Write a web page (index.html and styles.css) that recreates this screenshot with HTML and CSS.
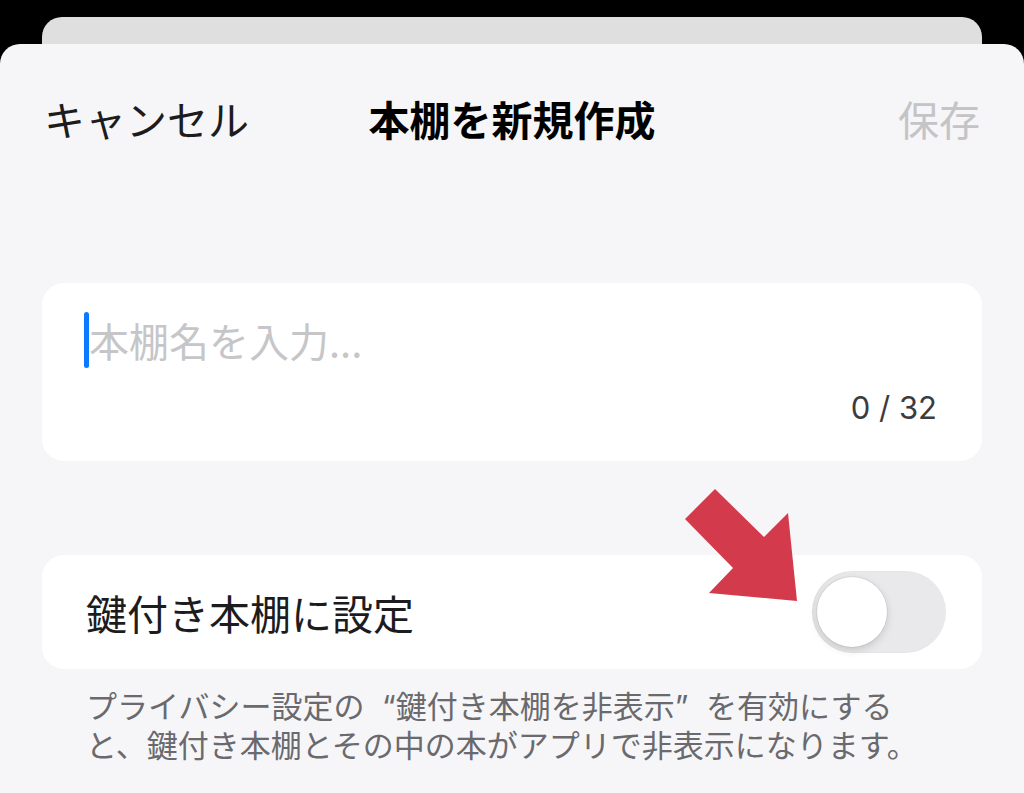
FILE: index.html
```html
<!DOCTYPE html>
<html lang="ja">
<head>
<meta charset="utf-8">
<title>本棚を新規作成</title>
<link rel="stylesheet" href="styles.css">
</head>
<body>
<div class="screen">
  <div class="back-card"></div>
  <div class="sheet">
    <header class="nav">
      <span class="nav-cancel">キャンセル</span>
      <span class="nav-title">本棚を新規作成</span>
      <span class="nav-save">保存</span>
    </header>

    <section class="input-card">
      <div class="input-row">
        <span class="caret"></span>
        <span class="placeholder">本棚名を入力...</span>
      </div>
      <div class="counter">0 / 32</div>
    </section>

    <section class="toggle-card">
      <span class="toggle-label">鍵付き本棚に設定</span>
      <span class="switch"><span class="knob"></span></span>
    </section>

    <p class="footnote">プライバシー設定の “鍵付き本棚を非表示” を有効にすると、鍵付き本棚とその中の本がアプリで非表示になります。</p>
  </div>

  <svg class="arrow" width="1024" height="793" viewBox="0 0 1024 793" aria-hidden="true">
    <polygon points="715,489 764,537 788,513 797,601 709,593 733,568 685,519" fill="#d33b4c"/>
  </svg>
</div>
</body>
</html>
```

FILE: styles.css
```css
* {
  box-sizing: border-box;
}

html, body {
  margin: 0;
  padding: 0;
  background: #000;
}

body {
  width: 1024px;
  height: 793px;
  overflow: hidden;
  font-family: "Inter", "Noto Sans CJK JP", sans-serif;
}

.screen {
  position: relative;
  width: 1024px;
  height: 793px;
  padding-top: 17px;
  display: flex;
  flex-direction: column;
}

.back-card {
  height: 27px;
  margin: 0 42px;
  background: #dfdfdf;
  border-radius: 20px 20px 0 0;
}

.sheet {
  flex: 1;
  background: #f6f6f8;
  border-radius: 20px 20px 0 0;
  display: flex;
  flex-direction: column;
}

.nav {
  height: 148px;
  padding: 0 44px;
  display: grid;
  grid-template-columns: 1fr auto 1fr;
  align-items: center;
  font-family: "Noto Sans CJK JP", sans-serif;
  font-size: 41px;
  line-height: 1;
}

.nav-cancel {
  color: #1c1c1e;
  justify-self: start;
}

.nav-title {
  color: #000;
  font-weight: 700;
}

.nav-save {
  color: #c4c4c7;
  justify-self: end;
}

.input-card {
  margin: 91px 42px 0;
  height: 178px;
  background: #fff;
  border-radius: 22px;
  padding: 29px 45px 0 42px;
}

.input-row {
  display: flex;
  align-items: center;
  height: 56px;
}

.caret {
  width: 5px;
  height: 56px;
  border-radius: 3px;
  background: #0a7aff;
  flex: none;
}

.placeholder {
  font-family: "Noto Sans CJK JP", sans-serif;
  font-size: 40px;
  line-height: 56px;
  color: #c6c6c8;
}

.counter {
  margin-top: 20px;
  text-align: right;
  font-family: "Inter", sans-serif;
  font-size: 31px;
  line-height: 40px;
  color: #3c3c3f;
}

.toggle-card {
  margin: 94px 42px 0;
  height: 114px;
  background: #fff;
  border-radius: 22px;
  padding: 0 36px 0 44px;
  display: flex;
  align-items: center;
  justify-content: space-between;
}

.toggle-label {
  font-family: "Noto Sans CJK JP", sans-serif;
  font-size: 41px;
  color: #1c1c1e;
}

.switch {
  position: relative;
  width: 134px;
  height: 82px;
  border-radius: 41px;
  background: #e9e9eb;
  box-shadow: inset 1px 0 2px rgba(0, 0, 0, 0.06);
}

.knob {
  position: absolute;
  left: 5px;
  top: 6px;
  width: 70px;
  height: 70px;
  border-radius: 50%;
  background: #fff;
  box-shadow: 0 3px 8px rgba(0, 0, 0, 0.15), 0 0 0 1px rgba(0, 0, 0, 0.05);
}

.footnote {
  margin: 18px 0 0;
  padding: 0 88px 0 86px;
  font-size: 31px;
  line-height: 39px;
  word-spacing: 9px;
  color: #6a6a6e;
}

.arrow {
  position: absolute;
  left: 0;
  top: 0;
  pointer-events: none;
}
```
